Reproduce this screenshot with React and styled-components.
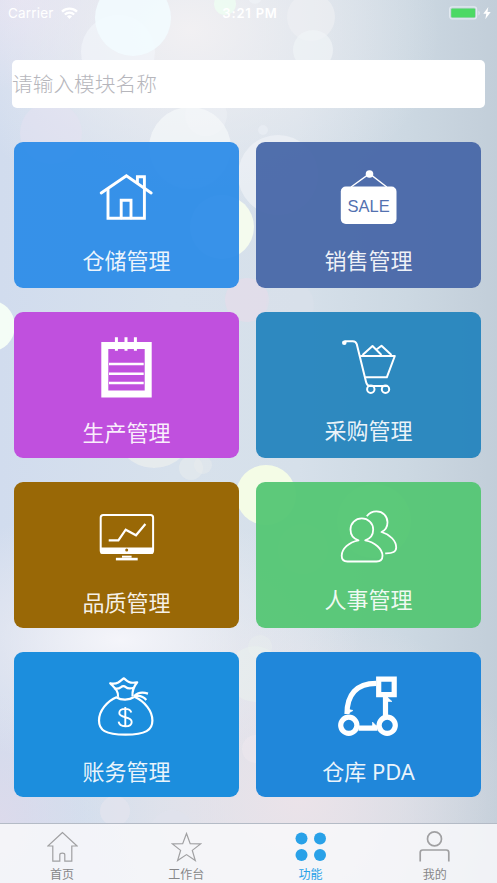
import React from 'react';
import styled, { createGlobalStyle } from 'styled-components';

const BUBBLES = [
  { x: 118, y: 52, r: 37, fill: '#f3f6fb', o: 0.6 },
  { x: 133, y: 18, r: 38, fill: '#f2fbff', o: 0.85 },
  { x: 225, y: 4, r: 11, fill: '#edfcf2', o: 0.9 },
  { x: 255, y: -3, r: 7, fill: '#f2f6fa', o: 0.5 },
  { x: 311, y: 17, r: 24, fill: '#eef0f2', o: 0.65 },
  { x: 313, y: 50, r: 20, fill: '#f0f4f6', o: 0.7 },
  { x: 51, y: 133, r: 31, fill: '#e6e2f2', o: 0.5 },
  { x: 206, y: 115, r: 21, fill: '#eff2f7', o: 0.4 },
  { x: 190, y: 148, r: 41, fill: '#f5f8fa', o: 0.7 },
  { x: 278, y: 175, r: 40, fill: '#f0f2f7', o: 0.65 },
  { x: 263, y: 130, r: 5, fill: '#eef2f8', o: 0.5 },
  { x: 222, y: 227, r: 32, fill: '#f5fcee', o: 0.95 },
  { x: 247, y: 300, r: 22, fill: '#e4dcea', o: 0.75 },
  { x: 290, y: 305, r: 24, fill: '#dce0ea', o: 0.4 },
  { x: -11, y: 326, r: 26, fill: '#f5fef5', o: 0.95 },
  { x: 154, y: 428, r: 40, fill: '#f0f1ee', o: 0.6 },
  { x: 191, y: 468, r: 12, fill: '#eaeeed', o: 0.5 },
  { x: 203, y: 465, r: 9, fill: '#eaeeed', o: 0.4 },
  { x: 266, y: 495, r: 30, fill: '#f5fde6', o: 0.95 },
  { x: 374, y: 521, r: 37, fill: '#eef6da', o: 0.9 },
  { x: 303, y: 549, r: 25, fill: '#eaf3e4', o: 0.6 },
  { x: 260, y: 647, r: 12, fill: '#eaf1ee', o: 0.35 },
  { x: 255, y: 674, r: 28, fill: '#eaf1ee', o: 0.5 },
  { x: 256, y: 749, r: 14, fill: '#f0e9ef', o: 0.45 },
  { x: 115, y: 811, r: 15, fill: '#e4e4ee', o: 0.7 },
  { x: 172, y: 832, r: 22, fill: '#dfe3ed', o: 0.7 },
];

const HouseIcon = () => (
  <Glyph strokeWidth="2.9" strokeLinecap="round">
    <path d="M10.2 31 35.4 13.7 60.2 31" />
    <path d="M17 27.5v28.700h36.400V14.700h-7v6" />
    <path d="M30.200 56V38.300H40V56" />
  </Glyph>
);

const SaleIcon = () => (
  <Glyph strokeWidth="1.4">
    <path d="M17 25 35.500 11.600 52.800 25" />
    <circle cx="35.500" cy="12" r="3.800" fill="#fff" stroke="none" />
    <rect x="6.800" y="24.600" width="55.700" height="37.300" rx="5" fill="#fff" stroke="none" />
    <SaleText x="34.600" y="49.900">SALE</SaleText>
  </Glyph>
);

const NotepadIcon = () => (
  <Glyph>
    <path d="M13.800 13.500h43.400v48.600H13.800z" strokeWidth="7" />
    <path d="M25.400 5.300v13.400M35 5.300v13.400M44.400 5.300v13.400" strokeWidth="3" />
    <path d="M18 32h34.700M18 41.700h34.700M18 51h34.700" strokeWidth="2.600" />
  </Glyph>
);

const CartIcon = () => (
  <Glyph strokeWidth="2" strokeLinejoin="round">
    <circle cx="10.300" cy="10.700" r="2.300" fill="#fff" stroke="none" />
    <path d="M10.500 9.200h8.300c2.600 0 3.400 1 4 3.100l9.200 37.500c.7 3 1.500 4.200 4 4.200h17.500" />
    <path d="M26.200 24h34.600l-8 21.300H31.200" />
    <path d="m28.500 23 10-9 9 9M42.800 17.300l4.700-3.500 10 9.200" />
    <circle cx="36.800" cy="57.300" r="3.700" />
    <circle cx="51.500" cy="57.300" r="3.700" />
  </Glyph>
);

const MonitorIcon = () => (
  <Glyph strokeWidth="2">
    <rect x="9.700" y="13" width="52.400" height="38" rx="2.500" />
    <path d="M9.700 48.600h52.400" strokeWidth="6.400" />
    <circle cx="35.700" cy="48" r="1.500" fill="#9b6806" stroke="none" />
    <path d="M31 54.700h9.600" />
    <path d="M24.900 57.100h21.800" strokeWidth="2.600" />
    <path d="M17.700 38.300h9.700l7.300-10.600L45 33.300 54.400 22" strokeWidth="2.200" />
  </Glyph>
);

const PeopleIcon = () => (
  <Glyph strokeWidth="1.800" strokeLinejoin="round">
    <path d="M24.500 38.300c-4.800-1.500-8-5.500-8-10.800 0-6.300 5-11.200 11.300-11.200S39.200 21.200 39.200 27.500c0 5.300-3.200 9.300-8 10.800C41 40.200 48.500 47 48.500 53.800c0 3.700-2 5.700-6 5.700h-29c-4 0-5.800-2-5.800-5.700 0-6.800 7-13.600 16.800-15.500z" />
    <path d="M32.800 14.300c2.200-3.200 5.700-5 9.700-5 6.500 0 11 4.900 11 11 0 4.500-2.300 8-6 9.700 8.700 2.500 14.700 9 14.700 15.500 0 4-3 6-11 5.800" />
  </Glyph>
);

const BagIcon = () => (
  <Glyph strokeWidth="2.200" strokeLinejoin="round">
    <path d="M26 25C16 29 8 39 8 48.500 8 58 14 62.700 34.500 62.700S61.400 58 61.400 48.500C61.400 39 54 29.500 43 24.500" />
    <path d="M27 24.800c.5-6-3-8.500-7.800-13.600 3.800 1 5.300.8 8-.7C29.700 9 31 7.500 33 6.300c1.800 1.400 2.800 2.700 5 3.700 2.700 1.300 5 .9 8.200.3-3.500 4.300-5.200 8.500-4.700 14" />
    <path d="M23 16.300c3 .9 5.200.3 7-1.200 1.800-1.600 3-1.600 4.800 0 1.700 1.500 4.500 1.600 8 .6M25.700 25.500c4.500 2.900 12.500 2.900 17.300-.5" />
    <path d="M43 24.200c3.500-3.700 8-4.500 14-2.600M43 24.500c5-1.500 9-.5 12.300 3.500" />
    <path d="M40.300 40.600c-.6-2.400-2.800-3.700-6-3.700-3.500 0-6 1.500-6 4.200 0 2.500 2 3.300 6 4.100 4.300.9 6.400 2.100 6.400 4.700 0 2.800-2.600 4.300-6.400 4.300-3.900 0-6.300-1.800-6.700-4.500M34.300 35v20" strokeWidth="1.900" />
  </Glyph>
);

const RouteIcon = () => (
  <Glyph strokeWidth="5.200">
    <path d="M44.700 7.200h15.500v15.500H44.700z" />
    <circle cx="14.800" cy="53.300" r="8.100" />
    <circle cx="53.200" cy="53.300" r="8.100" />
    <path d="M13 42C13 23 22 11.300 42.200 11.300M51.500 25v19M24.500 56.200h19" />
    <path d="m13 42 6-3.500-4-1zM53 25l5 4.500h-5zM38.500 50l5 5h-5z" fill="#fff" strokeWidth=".6" />
  </Glyph>
);

const MODULES = [
  { name: '仓储管理', color: 'rgba(45, 140, 232, 0.95)', Icon: HouseIcon, top: 102 },
  { name: '销售管理', color: 'rgba(72, 103, 168, 0.95)', Icon: SaleIcon, top: 102 },
  { name: '生产管理', color: '#c050de', Icon: NotepadIcon, top: 104 },
  { name: '采购管理', color: 'rgba(39, 133, 189, 0.96)', Icon: CartIcon, top: 102 },
  { name: '品质管理', color: 'rgba(152, 102, 3, 0.99)', Icon: MonitorIcon, top: 104 },
  { name: '人事管理', color: 'rgba(84, 198, 116, 0.95)', Icon: PeopleIcon, top: 101 },
  { name: '账务管理', color: '#1c8edd', Icon: BagIcon, top: 103 },
  { name: '仓库 PDA', color: '#2087da', Icon: RouteIcon, top: 103 },
];

const TABS = [
  {
    name: '首页',
    icon: <path d="M15.500 1.500.8 15h5v15.200h7v-6.500c0-2 5-2 5 0v6.500h7V15h5.300z" strokeWidth="1.200" />,
  },
  {
    name: '工作台',
    icon: <path d="m15.500 2.500 3.700 10.100 10.400.3-8.300 6.500 3 10.100-8.800-5.900-8.900 5.900 3-10.100-8.200-6.500 10.300-.3z" strokeWidth="1.200" />,
  },
  {
    name: '功能',
    active: true,
    icon: (
      <g fill="#29a1e8" stroke="none">
        <circle cx="6.500" cy="7.500" r="6" />
        <circle cx="25" cy="7.500" r="6" />
        <circle cx="6.500" cy="23.900" r="6" />
        <circle cx="25" cy="23.900" r="6" />
      </g>
    ),
  },
  {
    name: '我的',
    icon: (
      <g strokeWidth="1.700">
        <circle cx="15.500" cy="7.900" r="7" />
        <path d="M1.200 30.500v-9c0-1.700.8-2.500 2.500-2.500h23.600c1.700 0 2.500.8 2.500 2.500v9" />
      </g>
    ),
  },
];

function Glyph({ children, ...rest }) {
  return (
    <GlyphSvg viewBox="0 0 70 70" fill="none" stroke="#fff" {...rest}>
      {children}
    </GlyphSvg>
  );
}

function StatusBar() {
  return (
    <WrapperStatus>
      <Carrier>
        Carrier
        <svg width="17" height="13" viewBox="0 0 17 13" fill="none" stroke="#fff" strokeWidth="2.300">
          <path d="M1 4.600c4.300-4 10.700-4 15 0M3.800 7.500c2.800-2.400 6.600-2.400 9.400 0" />
          <path d="m8.500 12 2.600-2.700c-1.500-1.300-3.700-1.300-5.200 0z" fill="#fff" stroke="none" />
        </svg>
      </Carrier>
      <Time>3:21 PM</Time>
      <Battery>
        <svg width="44" height="14" viewBox="0 0 44 14">
          <rect x="1.600" y=".8" width="27" height="12" rx="2.500" fill="none" stroke="#e2e9f0" strokeWidth="1.200" />
          <rect x="3.200" y="2.400" width="24" height="9" rx="1" fill="#4cd964" />
          <path d="M30.500 4.800c1.600.6 1.600 4 0 4.600z" fill="#e2e9f0" />
          <path d="m40.300 1-5 6.800h3l-1 5.400 5.400-7.300h-3.200z" fill="#fff" />
        </svg>
      </Battery>
    </WrapperStatus>
  );
}

function App() {
  return (
    <Screen>
      <GlobalStyle />
      <Backdrop viewBox="0 0 497 883">
        {BUBBLES.map((b) => (
          <circle key={`${b.x}-${b.y}`} cx={b.x} cy={b.y} r={b.r} fill={b.fill} opacity={b.o} />
        ))}
      </Backdrop>
      <StatusBar />
      <Search placeholder="请输入模块名称" />
      <Grid>
        {MODULES.map(({ name, color, Icon, top }) => (
          <Card key={name} $color={color}>
            <Icon />
            <CardName $top={top}>{name}</CardName>
          </Card>
        ))}
      </Grid>
      <TabBar>
        {TABS.map((tab) => (
          <Tab key={tab.name} $active={tab.active}>
            <svg width="31" height="32" viewBox="0 0 31 32" fill="none" stroke="#a0a0a2">
              {tab.icon}
            </svg>
            <TabName>{tab.name}</TabName>
          </Tab>
        ))}
      </TabBar>
    </Screen>
  );
}

export default App;

const GlobalStyle = createGlobalStyle`
  * {
    box-sizing: border-box;
  }
  body {
    margin: 0;
    font-family: Inter, 'Noto Sans CJK SC', sans-serif;
  }
`;

const Screen = styled.div`
  position: relative;
  width: 497px;
  height: 883px;
  display: flex;
  flex-direction: column;
  overflow: hidden;
  background:
    radial-gradient(ellipse 250px 190px at 190px 30px, rgba(243, 241, 243, 0.95), rgba(243, 241, 243, 0.45) 50%, rgba(243, 241, 243, 0)),
    radial-gradient(ellipse 240px 130px at 120px 640px, rgba(246, 246, 251, 0.95), rgba(240, 238, 243, 0.45) 50%, rgba(240, 238, 243, 0)),
    radial-gradient(ellipse 220px 190px at 300px 800px, rgba(236, 227, 233, 0.95), rgba(236, 227, 233, 0.5) 50%, rgba(236, 227, 233, 0)),
    radial-gradient(ellipse 110px 90px at 20px 0, rgba(228, 225, 242, 0.9), rgba(228, 225, 242, 0)),
    radial-gradient(ellipse 90px 130px at 0 820px, rgba(221, 218, 235, 0.9), rgba(221, 218, 235, 0)),
    linear-gradient(90deg, #d1dcee 0%, #d7e1ec 35%, #d6e0ea 60%, #ccd8e2 82%, #c2ced9 100%);
`;

const Backdrop = styled.svg`
  position: absolute;
  inset: 0;
  width: 100%;
  height: 100%;
`;

const WrapperStatus = styled.div`
  position: relative;
  height: 26px;
  display: grid;
  grid-template-columns: 1fr auto 1fr;
  align-items: center;
  padding: 0 5px 0 8px;
  color: #fff;
  flex-shrink: 0;
`;

const Carrier = styled.div`
  display: flex;
  align-items: center;
  gap: 7px;
  font-size: 13.500px;
  letter-spacing: 0.200px;
`;

const Time = styled.div`
  font-size: 13px;
  font-weight: 600;
  letter-spacing: 0.800px;
`;

const Battery = styled.div`
  display: flex;
  justify-content: flex-end;
`;

const Search = styled.input`
  position: relative;
  height: 48px;
  margin: 34px 12px 0;
  padding: 0 1px 3px 0;
  border: none;
  border-radius: 5px;
  outline: none;
  background: #fff;
  font-family: 'Noto Sans CJK SC', sans-serif;
  font-weight: 300;
  font-size: 20.700px;
  flex-shrink: 0;
  &::placeholder {
    color: #b6b6bc;
    opacity: 1;
  }
`;

const Grid = styled.div`
  position: relative;
  display: grid;
  grid-template-columns: 224.600px 224.600px;
  grid-auto-rows: 145.600px;
  column-gap: 17.600px;
  row-gap: 24.200px;
  padding: 34.400px 0 0 14.100px;
`;

const Card = styled.div`
  display: grid;
  grid-template-rows: 100%;
  justify-items: center;
  border-radius: 9px;
  background: ${(props) => props.$color};
`;

const GlyphSvg = styled.svg`
  grid-area: 1 / 1;
  width: 70px;
  height: 70px;
  margin-top: 20px;
`;

const SaleText = styled.text`
  font-family: 'Liberation Sans', sans-serif;
  font-size: 16.500px;
  text-anchor: middle;
  fill: #5371b0;
  stroke: none;
`;

const CardName = styled.div`
  grid-area: 1 / 1;
  margin-top: ${(props) => props.$top}px;
  font-family: 'Noto Sans', 'Noto Sans CJK SC', sans-serif;
  font-size: 22px;
  line-height: 32px;
  color: rgba(255, 255, 255, 0.92);
`;

const TabBar = styled.div`
  position: relative;
  height: 60px;
  margin-top: auto;
  display: grid;
  grid-template-columns: repeat(4, 1fr);
  border-top: 1px solid #b4bbc6;
  background: rgba(248, 248, 250, 0.85);
  flex-shrink: 0;
`;

const Tab = styled.div`
  display: flex;
  flex-direction: column;
  align-items: center;
  padding-top: 7px;
  color: ${(props) => (props.$active ? '#29a1e8' : '#868688')};
`;

const TabName = styled.div`
  font-family: 'Noto Sans CJK SC', sans-serif;
  font-size: 12px;
  line-height: 18px;
  margin-top: 2px;
`;
